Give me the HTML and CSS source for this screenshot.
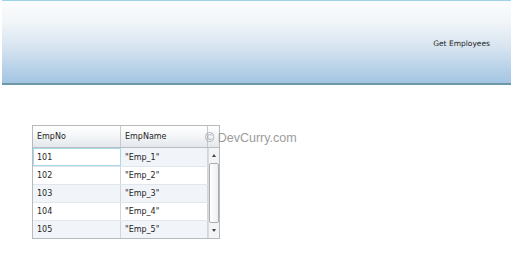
FILE: index.html
```html
<!DOCTYPE html>
<html lang="en">
<head>
    <meta charset="UTF-8">
    <title>Get Employees</title>
    <link rel="stylesheet" href="styles.css">
</head>
<body>
    <div class="toolbar">
        <span class="toolbar-link">Get Employees</span>
    </div>

    <div class="stage">
        <div class="grid">
            <div class="grid-head">
                <div class="col col-no">EmpNo</div>
                <div class="col col-name">EmpName</div>
                <div class="col col-spacer"></div>
            </div>
            <div class="grid-body">
                <div class="rows">
                    <div class="row alt">
                        <div class="cell col-no focused">101</div>
                        <div class="cell col-name">"Emp_1"</div>
                    </div>
                    <div class="row">
                        <div class="cell col-no">102</div>
                        <div class="cell col-name">"Emp_2"</div>
                    </div>
                    <div class="row alt">
                        <div class="cell col-no">103</div>
                        <div class="cell col-name">"Emp_3"</div>
                    </div>
                    <div class="row">
                        <div class="cell col-no">104</div>
                        <div class="cell col-name">"Emp_4"</div>
                    </div>
                    <div class="row alt">
                        <div class="cell col-no">105</div>
                        <div class="cell col-name">"Emp_5"</div>
                    </div>
                </div>
                <div class="scrollbar">
                    <div class="arrow up"></div>
                    <div class="thumb"></div>
                    <div class="arrow down"></div>
                </div>
            </div>
        </div>
        <div class="watermark">© DevCurry.com</div>
    </div>
</body>
</html>
```

FILE: styles.css
```css
body {
    margin: 0;
    font-family: "DejaVu Sans", sans-serif;
    font-size: 8px;
    color: #1e1e1e;
    background: #fff;
}

.toolbar {
    margin-left: 2px;
    height: 82px;
    border-top: 1px solid #9fd3ea;
    border-bottom: 2px solid #6e97a9;
    background: linear-gradient(to bottom, #fbfcfd 0%, #f2f6f9 25%, #d8e5f1 55%, #a3c5e2 100%);
    display: flex;
    align-items: center;
    justify-content: flex-end;
    padding-right: 21px;
}

.toolbar-link {
    margin-top: 3px;
    font-size: 7.5px;
    color: #222;
}

.stage {
    position: relative;
    padding: 40px 0 0 32px;
}

.grid {
    width: 186px;
    border: 1px solid #b5babf;
    background: #fff;
}

.grid-head {
    display: flex;
    height: 21px;
    border-bottom: 1px solid #b9bec3;
    background: linear-gradient(to bottom, #ffffff 0%, #f3f5f7 50%, #e4e8ec 100%);
}

.col {
    display: flex;
    align-items: center;
    padding-left: 4px;
    box-sizing: border-box;
    border-right: 1px solid #c6cbd0;
}

.col-no {
    width: 88px;
}

.col-name {
    width: 87px;
}

.col-spacer {
    flex: 1;
    border-right: none;
}

.grid-body {
    display: flex;
}

.rows {
    width: 175px;
}

.row {
    display: flex;
    height: 18px;
    box-sizing: border-box;
    background: #fff;
}

.row + .row {
    border-top: 1px solid #e2e6ea;
}

.row.alt {
    background: #f1f4f8;
}

.cell {
    display: flex;
    align-items: center;
    padding-left: 4px;
    box-sizing: border-box;
    border-right: 1px solid #d2d6da;
}

.cell.focused {
    border: 1px solid #a9d8ea;
    background: #fff;
    padding-left: 3px;
}

.scrollbar {
    flex: 1;
    display: flex;
    flex-direction: column;
    align-items: center;
    background: #f3f4f5;
    border-left: 1px solid #d8dbde;
}

.arrow {
    width: 0;
    height: 0;
    margin: 6px 0;
    border-left: 2px solid transparent;
    border-right: 2px solid transparent;
}

.arrow.up {
    border-bottom: 3px solid #444;
}

.arrow.down {
    border-top: 3px solid #444;
}

.thumb {
    flex: 1;
    width: 8px;
    border: 1px solid #a8adb2;
    border-radius: 2px;
    background: linear-gradient(to right, #ffffff, #eef0f2);
}

.watermark {
    position: absolute;
    left: 205px;
    top: 46px;
    font-family: "Liberation Sans", Arial, sans-serif;
    font-size: 12.5px;
    color: #9c9c9c;
}
```
